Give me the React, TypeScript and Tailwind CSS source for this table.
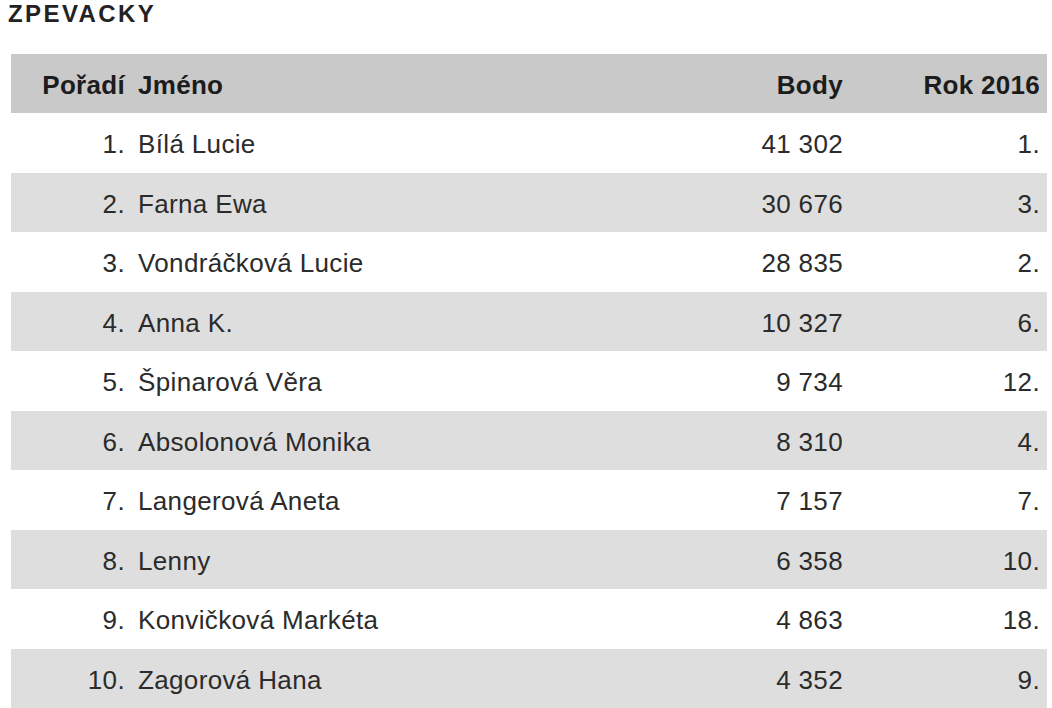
import React from "react";

const rows: [string, string, string, string][] = [
  ["1.", "Bílá Lucie", "41 302", "1."],
  ["2.", "Farna Ewa", "30 676", "3."],
  ["3.", "Vondráčková Lucie", "28 835", "2."],
  ["4.", "Anna K.", "10 327", "6."],
  ["5.", "Špinarová Věra", "9 734", "12."],
  ["6.", "Absolonová Monika", "8 310", "4."],
  ["7.", "Langerová Aneta", "7 157", "7."],
  ["8.", "Lenny", "6 358", "10."],
  ["9.", "Konvičková Markéta", "4 863", "18."],
  ["10.", "Zagorová Hana", "4 352", "9."],
];

export default function App() {
  return (
    <div
      className="w-[1052px] h-[708px] overflow-hidden bg-white text-[#2b2b2b]"
      style={{ fontFamily: '"Liberation Sans", Arial, sans-serif' }}
    >
      <div className="pl-[8px] h-[54px] text-[24px] font-bold leading-[28px] tracking-[2.4px] text-[#222]">
        ZPEVACKY
      </div>
      <div className="ml-[11px] w-[1036px]">
        <div className="grid grid-cols-[119px_470px_250px_197px] h-[59px] pt-[4px] items-center bg-[#c9c9c9] text-[26px] tracking-[0.3px] font-bold text-[#1c1c1c]">
          <div className="text-right pr-[5px]">Pořadí</div>
          <div className="pl-[8px]">Jméno</div>
          <div className="text-right pr-[7px]">Body</div>
          <div className="text-right pr-[7px]">Rok 2016</div>
        </div>
        {rows.map((r, i) => (
          <div
            key={i}
            className={
              "grid grid-cols-[119px_470px_250px_197px] h-[59.5px] pt-[4px] items-center text-[26px] tracking-[0.35px] " +
              (i % 2 === 1 ? "bg-[#dedede]" : "bg-white")
            }
          >
            <div className="text-right pr-[5px]">{r[0]}</div>
            <div className="pl-[8px]">{r[1]}</div>
            <div className="text-right pr-[7px]">{r[2]}</div>
            <div className="text-right pr-[7px]">{r[3]}</div>
          </div>
        ))}
      </div>
    </div>
  );
}
